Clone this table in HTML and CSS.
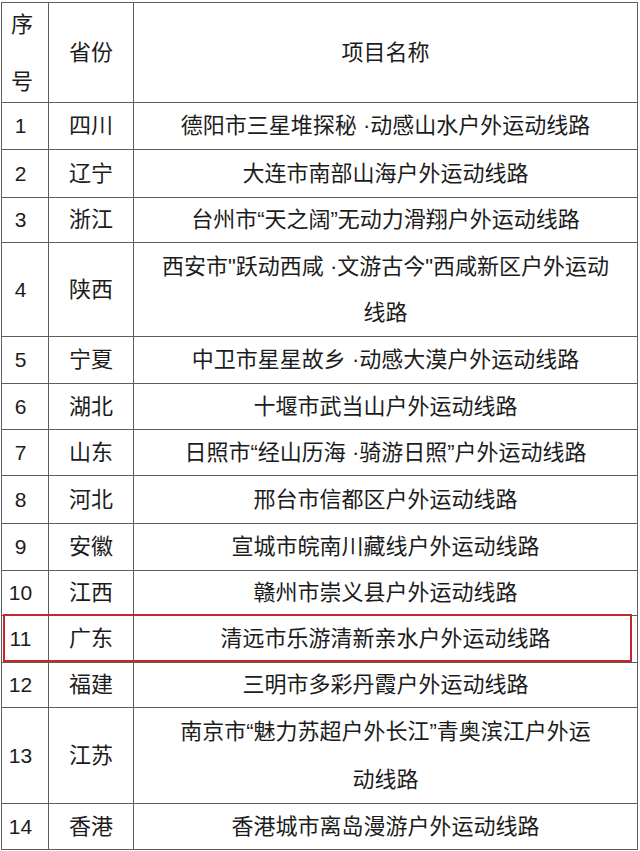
FILE: index.html
```html
<!DOCTYPE html>
<html lang="zh-CN">
<head>
<meta charset="utf-8">
<title>户外运动线路</title>
<link rel="stylesheet" href="styles.css">
</head>
<body>
<div class="table">
  <div class="cell num head-num">序<br>号</div>
  <div class="cell prov">省份</div>
  <div class="cell name">项目名称</div>

  <div class="cell num">1</div><div class="cell prov">四川</div><div class="cell name">德阳市三星堆探秘 ·动感山水户外运动线路</div>
  <div class="cell num">2</div><div class="cell prov">辽宁</div><div class="cell name">大连市南部山海户外运动线路</div>
  <div class="cell num">3</div><div class="cell prov">浙江</div><div class="cell name">台州市“天之阔”无动力滑翔户外运动线路</div>
  <div class="cell num">4</div><div class="cell prov">陕西</div><div class="cell name">西安市"跃动西咸 ·文游古今"西咸新区户外运动<br>线路</div>
  <div class="cell num">5</div><div class="cell prov">宁夏</div><div class="cell name">中卫市星星故乡 ·动感大漠户外运动线路</div>
  <div class="cell num">6</div><div class="cell prov">湖北</div><div class="cell name">十堰市武当山户外运动线路</div>
  <div class="cell num">7</div><div class="cell prov">山东</div><div class="cell name">日照市“经山历海 ·骑游日照”户外运动线路</div>
  <div class="cell num">8</div><div class="cell prov">河北</div><div class="cell name">邢台市信都区户外运动线路</div>
  <div class="cell num">9</div><div class="cell prov">安徽</div><div class="cell name">宣城市皖南川藏线户外运动线路</div>
  <div class="cell num">10</div><div class="cell prov">江西</div><div class="cell name">赣州市崇义县户外运动线路</div>
  <div class="cell num">11</div><div class="cell prov">广东</div><div class="cell name">清远市乐游清新亲水户外运动线路</div>
  <div class="cell num">12</div><div class="cell prov">福建</div><div class="cell name">三明市多彩丹霞户外运动线路</div>
  <div class="cell num">13</div><div class="cell prov">江苏</div><div class="cell name name-tall">南京市“魅力苏超户外长江”青奥滨江户外运<br>动线路</div>
  <div class="cell num">14</div><div class="cell prov">香港</div><div class="cell name">香港城市离岛漫游户外运动线路</div>

  <div class="highlight"></div>
</div>
</body>
</html>
```

FILE: styles.css
```css
html, body {
  margin: 0;
  padding: 0;
  background: #ffffff;
}

body {
  width: 640px;
  height: 851px;
  overflow: hidden;
  font-family: "Liberation Sans", "Noto Sans CJK SC", sans-serif;
  color: #1c1c1c;
}

.table {
  position: relative;
  margin: 2px 0 0 1px;
  display: grid;
  grid-template-columns: 46px 84px 503px;
  grid-template-rows: 99px 46px 47px 44px 93px 46px 45px 45px 47px 46px 44px 46px 44px 95px 45px;
  gap: 1px;
  padding: 1px;
  width: max-content;
  background: #5e5e5e;
}

.cell {
  background: #ffffff;
  display: flex;
  align-items: center;
  justify-content: center;
  text-align: center;
  font-size: 22px;
  line-height: 46px;
}

.num {
  padding-right: 9px;
  font-size: 21px;
}

.head-num {
  font-size: 22px;
  line-height: 57px;
  padding-right: 6px;
}

.name-tall {
  line-height: 48px;
}

.highlight {
  position: absolute;
  left: 2px;
  top: 612px;
  width: 625px;
  height: 44px;
  border: 2px solid #c7262d;
  pointer-events: none;
}
```
